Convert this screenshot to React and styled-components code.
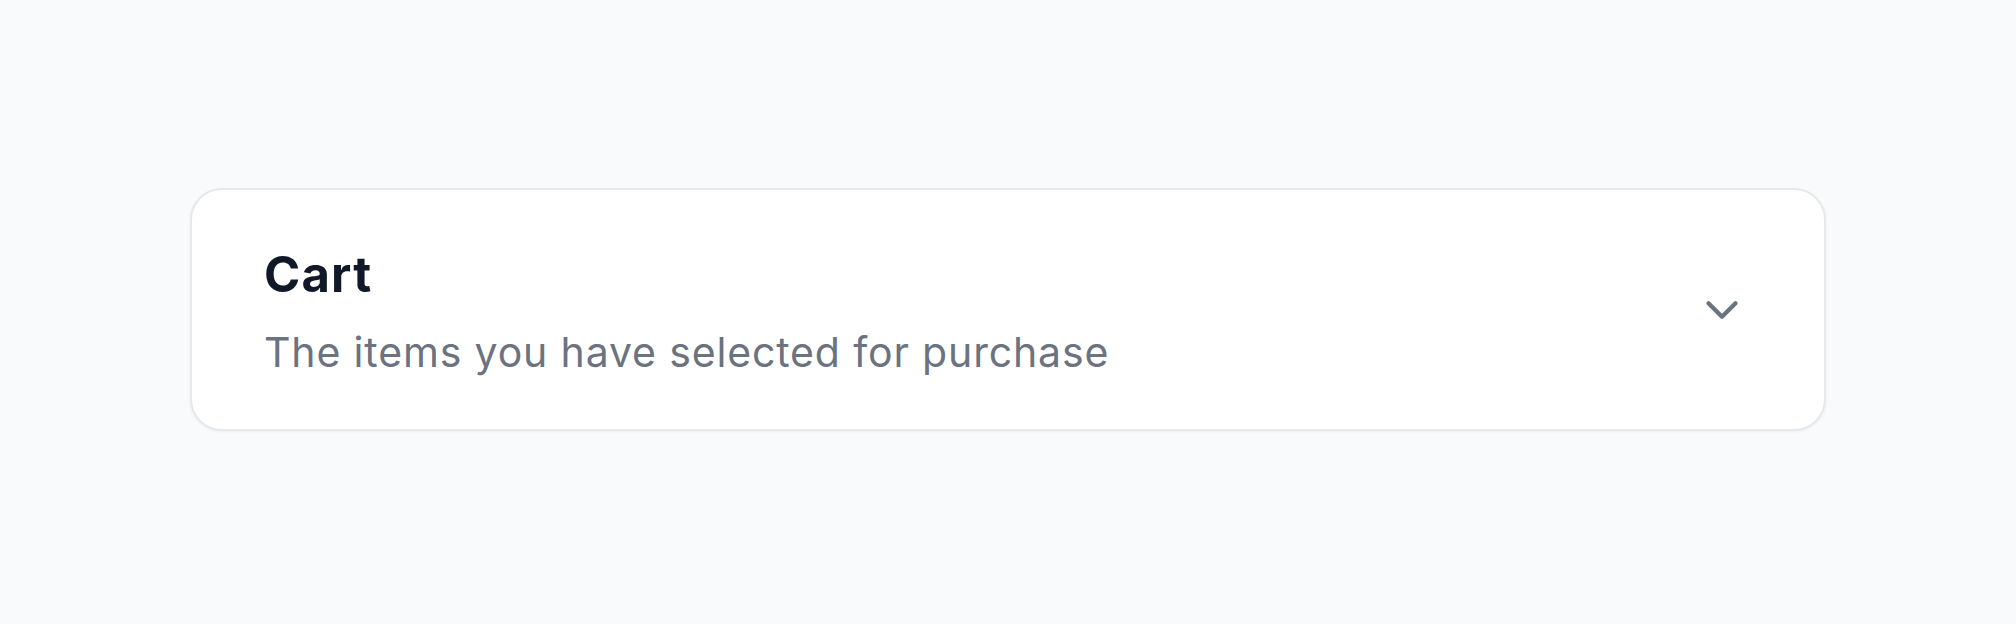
import React from 'react';
import styled, { createGlobalStyle } from 'styled-components';
import { ChevronDown } from 'lucide-react';

const GlobalStyle = createGlobalStyle`
  html, body {
    margin: 0;
    padding: 0;
    background: #f9fafb;
  }
  body {
    font-family: Inter, "Noto Sans", sans-serif;
  }
`;

const Page = styled.div`
  min-height: 624px;
  padding: 188px 190px 0;
  box-sizing: border-box;
`;

const Card = styled.div`
  display: flex;
  align-items: center;
  justify-content: space-between;
  background: #ffffff;
  border: 2px solid #e7e8eb;
  border-radius: 32px;
  padding: 55px 72px 49px;
  box-shadow: 0 1px 3px rgba(17, 24, 39, 0.05);
`;

const Heading = styled.div`
  display: flex;
  flex-direction: column;
  gap: 19px;
`;

const Title = styled.h2`
  margin: 0;
  font-size: 49px;
  line-height: 60px;
  font-weight: 700;
  color: #111827;
  letter-spacing: 1.2px;
`;

const Subtitle = styled.p`
  margin: 0;
  font-size: 41px;
  line-height: 56px;
  font-weight: 400;
  color: #6b7280;
  letter-spacing: 0.85px;
`;

const Toggle = styled.button`
  display: flex;
  align-items: center;
  justify-content: center;
  width: 60px;
  height: 60px;
  padding: 0;
  border: none;
  background: transparent;
  color: #6b7280;
  cursor: pointer;
  margin-top: -6px;
`;

export default function App() {
  return (
    <Page>
      <GlobalStyle />
      <Card>
        <Heading>
          <Title>Cart</Title>
          <Subtitle>The items you have selected for purchase</Subtitle>
        </Heading>
        <Toggle aria-label="Expand">
          <ChevronDown size={54} strokeWidth={1.9} />
        </Toggle>
      </Card>
    </Page>
  );
}
